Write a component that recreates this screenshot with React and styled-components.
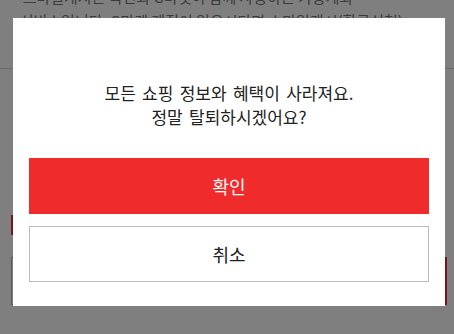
import React from "react";
import styled, { createGlobalStyle } from "styled-components";

const GlobalStyle = createGlobalStyle`
    html, body {
        margin: 0;
        padding: 0;
        background: #fff;
        overflow: hidden;
    }
    body {
        font-family: "Noto Sans CJK KR", "Noto Sans", sans-serif;
    }
`;

const Page = styled.div`
    width: 454px;
    height: 334px;
    display: flex;
    flex-direction: column;
`;

const Notice = styled.div`
    margin-top: -14px;
    padding: 0 11px 36px 13px;
    font-size: 15px;
    line-height: 22px;
    color: #777;
    white-space: nowrap;
    border-bottom: 1px solid #d4d4d4;
`;

const Bullet = styled.span`
    font-size: 10px;
    margin-right: 4px;
`;

const Section = styled.div`
    display: flex;
    flex-direction: column;
    gap: 22px;
    padding: 146px 7px 0 11px;
`;

const RedTab = styled.div`
    width: 80px;
    height: 20px;
    background: #f0282d;
`;

const InputRow = styled.div`
    display: flex;
    height: 48px;
`;

const FakeInput = styled.div`
    flex: 1;
    border: 1px solid #b4b4b4;
`;

const RedButton = styled.div`
    width: 90px;
    background: #f0282d;
`;

const Overlay = styled.div`
    position: fixed;
    inset: 0;
    background: rgba(0, 0, 0, 0.5);
    display: flex;
    align-items: flex-start;
    padding: 18px 9px 0 13px;
`;

const Modal = styled.div`
    width: 432px;
    height: 288px;
    box-sizing: border-box;
    background: #fff;
    padding: 63px 16px 24px;
    display: flex;
    flex-direction: column;
`;

const Message = styled.p`
    margin: 0 0 29px;
    text-align: center;
    font-size: 17px;
    line-height: 24px;
    word-spacing: 2.5px;
    color: #222;
`;

const Buttons = styled.div`
    display: flex;
    flex-direction: column;
    gap: 12px;
`;

const ActionButton = styled.button`
    height: 56px;
    width: 100%;
    font-family: "Noto Sans CJK KR", "Noto Sans", sans-serif;
    font-size: 18px;
    cursor: pointer;
    border: ${(p) => (p.$primary ? "none" : "1px solid #bbb")};
    background: ${(p) => (p.$primary ? "#ef2b2b" : "#fff")};
    color: ${(p) => (p.$primary ? "#fff" : "#222")};
`;

const App = () => {
    return (
        <>
            <GlobalStyle />
            <Page>
                <Notice>
                    <Bullet>·</Bullet>스마일캐시는 옥션과 G마켓이 함께 사용하는 가상계좌
                    <br />
                    &nbsp;&nbsp;서비스입니다. G마켓 계정이 있으시다면 스마일캐시(환급신청)
                </Notice>
                <Section>
                    <RedTab />
                    <InputRow>
                        <FakeInput />
                        <RedButton />
                    </InputRow>
                </Section>
            </Page>
            <Overlay>
                <Modal>
                    <Message>
                        모든 쇼핑 정보와 혜택이 사라져요.
                        <br />
                        정말 탈퇴하시겠어요?
                    </Message>
                    <Buttons>
                        <ActionButton $primary>확인</ActionButton>
                        <ActionButton>취소</ActionButton>
                    </Buttons>
                </Modal>
            </Overlay>
        </>
    );
};

export default App;
